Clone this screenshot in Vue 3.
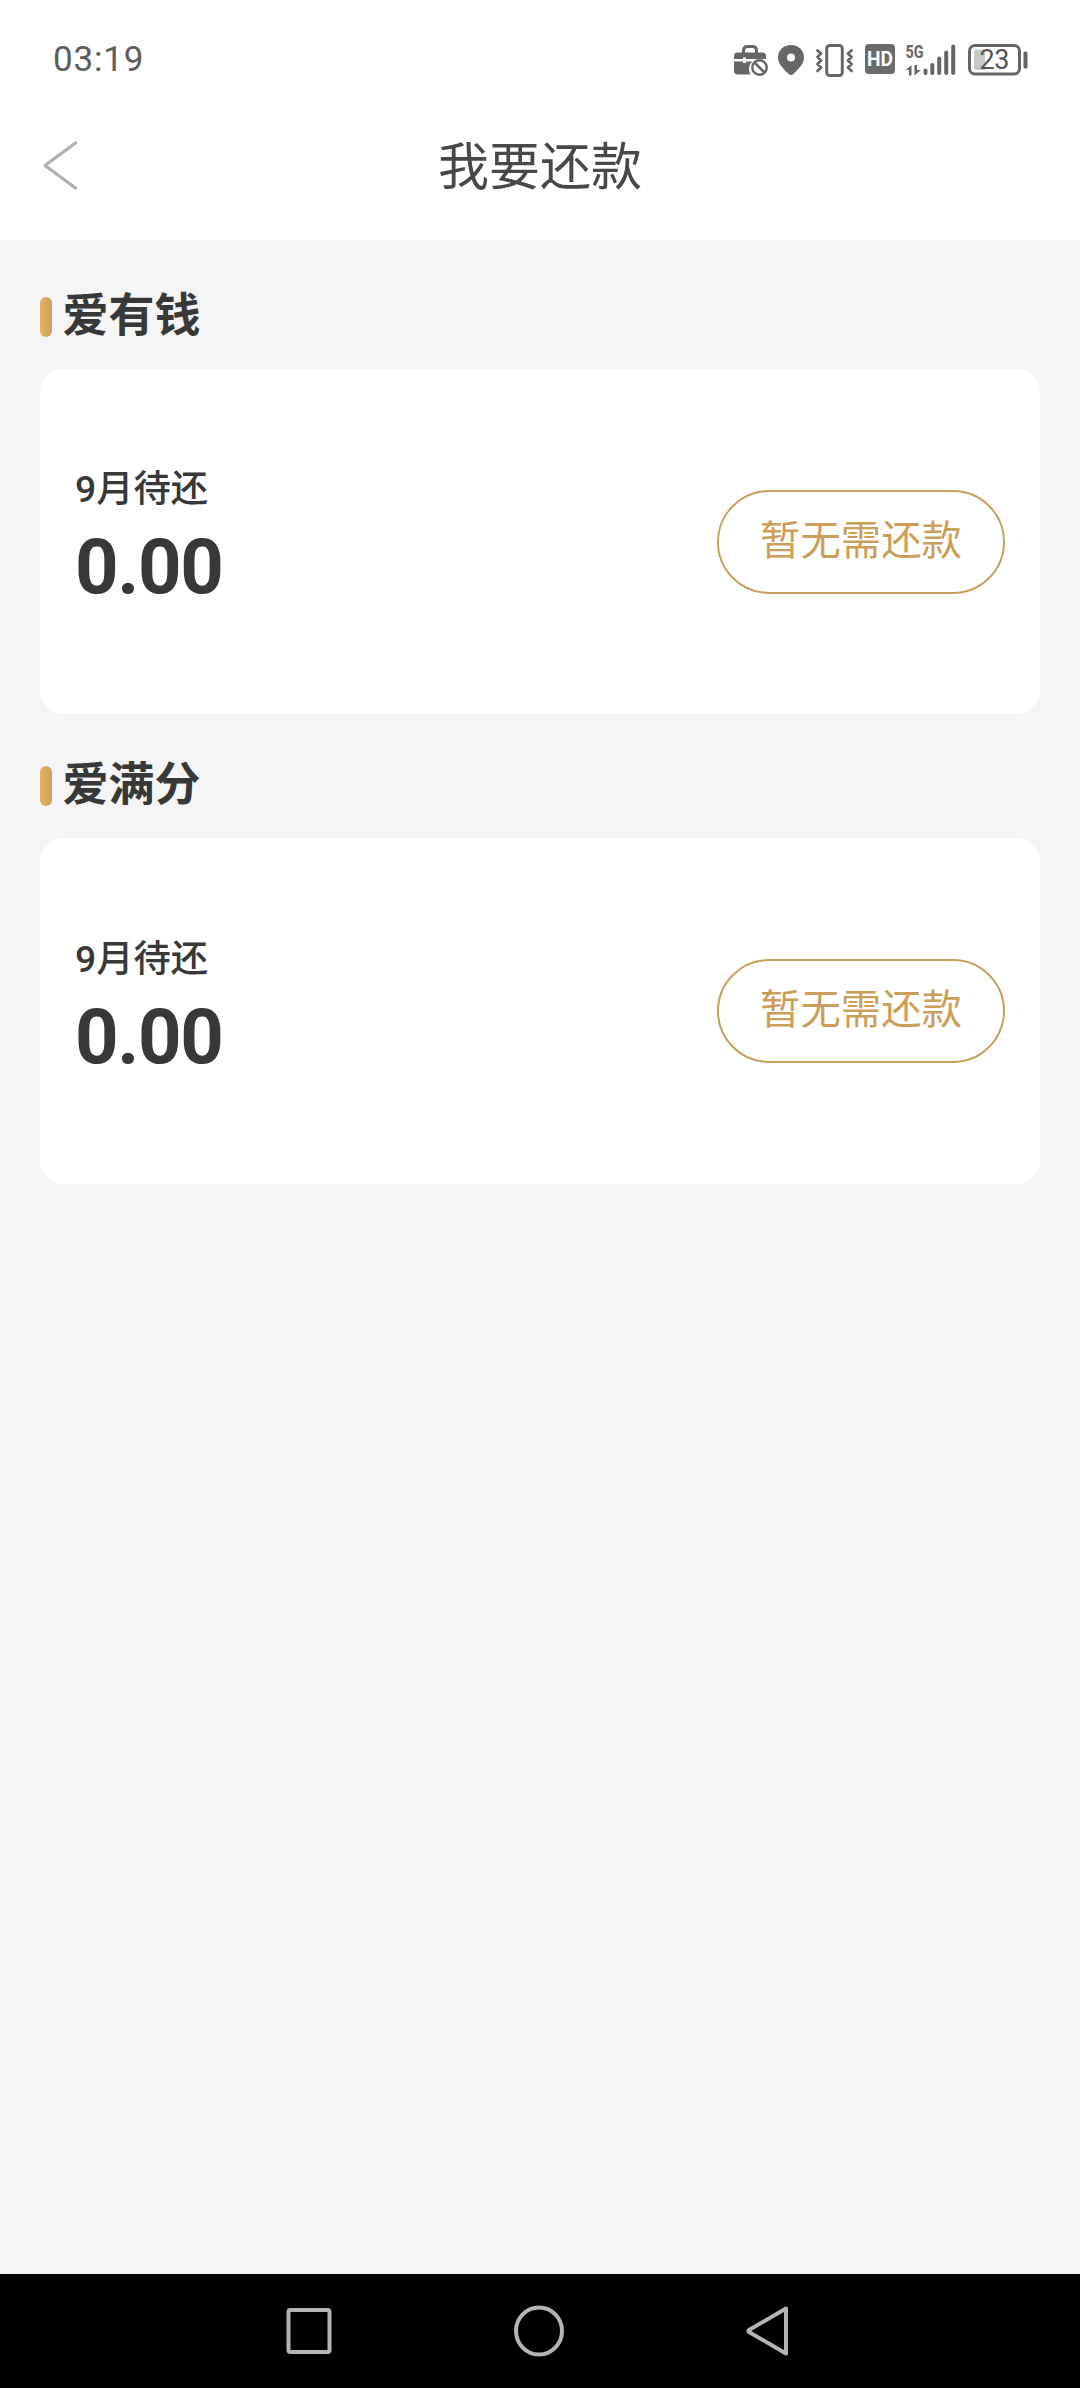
<script setup>
const accounts = [
  { name: '爱有钱', label: '9月待还', amount: '0.00', action: '暂无需还款' },
  { name: '爱满分', label: '9月待还', amount: '0.00', action: '暂无需还款' },
]
</script>

<template>
  <div class="screen">
    <header class="top">
      <div class="status">
        <span class="time">03:19</span>
        <div class="icons">
          <svg class="bag" width="35" height="34" viewBox="0 0 35 34">
            <path d="M9.500 10V6.500Q9.500 2.500 13.500 2.500H18.500Q22.500 2.500 22.500 6.500V10" fill="none" stroke="#666" stroke-width="3" />
            <path d="M0 15V12Q0 8.500 3.500 8.500H28.500Q32 8.500 32 12V15H12V13.500H9V15Z" fill="#666" />
            <path d="M0 17.500H9V19H12V17.500H18.500Q15 20.500 15 25Q15 28 16.500 30.500H4Q0 30.500 0 26.500Z" fill="#666" />
            <circle cx="25.500" cy="23.500" r="7.200" fill="none" stroke="#666" stroke-width="2.500" />
            <path d="M20.500 18.500L30.500 28.500" stroke="#666" stroke-width="2.500" />
          </svg>
          <svg class="pin" width="26" height="34" viewBox="0 0 26 34">
            <path fill-rule="evenodd" d="M13 0C5.500 0 0 5.300 0 12.500C0 19 6 24.500 11 29.200Q13 31 15 29.200C20 24.500 26 19 26 12.500C26 5.300 20.500 0 13 0ZM13 8.500A4 4 0 1 1 13 16.500A4 4 0 1 1 13 8.500Z" fill="#666" />
          </svg>
          <svg class="vibrate" width="37" height="34" viewBox="0 0 37 34">
            <rect x="10.700" y="1.500" width="15.600" height="30" rx="3" fill="none" stroke="#666" stroke-width="3" />
            <path d="M1.500 6.500L5 9.500L1.500 13L5 16.500L1.500 20L5 23.500L1.500 27M35.500 6.500L32 9.500L35.500 13L32 16.500L35.500 20L32 23.500L35.500 27" fill="none" stroke="#666" stroke-width="2.800" stroke-linejoin="round" stroke-linecap="round" />
          </svg>
          <svg class="hd" width="30" height="34" viewBox="0 0 30 34">
            <rect width="30" height="30" rx="4" fill="#6b6b6b" />
            <text x="15" y="22.300" text-anchor="middle" textLength="26" lengthAdjust="spacingAndGlyphs" font-size="21" font-weight="700" fill="#fff">HD</text>
          </svg>
          <svg class="signal" width="50" height="34" viewBox="0 0 50 34">
            <text x="-0.500" y="13.500" textLength="18" lengthAdjust="spacingAndGlyphs" font-size="18.500" font-weight="700" fill="#666">5G</text>
            <path d="M0 26L5.500 21V31.500H3V26ZM8.500 21H11V26H15L8.500 31.500Z" fill="#666" />
            <path d="M19.500 26.500V29M26.300 21V29M33.200 14.500V29M40.200 8.500V29M47.200 2.500V29" stroke="#666" stroke-width="4" stroke-linecap="round" />
          </svg>
          <svg class="battery" width="60" height="34" viewBox="0 0 60 34">
            <rect x="1.500" y="1.500" width="50" height="28.500" rx="5.500" fill="none" stroke="#666" stroke-width="3" />
            <path d="M17 5.500H9Q6 5.500 6 8.500V23Q6 26 9 26H17Z" fill="#c8c8c8" />
            <text x="26.500" y="25" text-anchor="middle" textLength="30" font-size="27" fill="#555">23</text>
            <rect x="55.500" y="7.500" width="4" height="17" rx="1.500" fill="#666" />
          </svg>
        </div>
      </div>
      <nav class="bar">
        <svg class="back" width="36" height="50" viewBox="0 0 36 50">
          <path d="M33.500 2L3 24.500L33.500 47" fill="none" stroke="#b0b0b0" stroke-width="3.200" stroke-linecap="round" stroke-linejoin="round" />
        </svg>
        <h1>我要还款</h1>
      </nav>
    </header>

    <main>
      <section v-for="item in accounts" :key="item.name">
        <h2><i class="mark"></i><span>{{ item.name }}</span></h2>
        <div class="card">
          <div class="due">
            <div class="label">{{ item.label }}</div>
            <div class="amount">{{ item.amount }}</div>
          </div>
          <button type="button"><span>{{ item.action }}</span></button>
        </div>
      </section>
    </main>

    <footer>
      <svg width="46" height="50" viewBox="0 0 46 50"><rect x="2.500" y="4" width="41" height="42" rx="2" /></svg>
      <svg width="50" height="52" viewBox="0 0 50 52"><ellipse cx="25" cy="26" rx="23" ry="23.500" /></svg>
      <svg width="44" height="52" viewBox="0 0 44 52"><path d="M40 3.500V48.500L3 27Q2 26 3 25Z" stroke-linejoin="round" /></svg>
    </footer>
  </div>
</template>

<style>
body {
  margin: 0;
}
</style>

<style scoped>
.screen {
  width: 1080px;
  height: 2388px;
  display: flex;
  flex-direction: column;
  background: #f5f5f5;
  color: #383838;
  font-family: Roboto, "Noto Sans CJK SC", sans-serif;
  overflow: hidden;
}
.top {
  height: 240px;
  background: #fff;
}
.status {
  height: 92px;
  padding: 0 52px 0 53px;
  box-sizing: border-box;
  display: flex;
  justify-content: space-between;
  align-items: flex-start;
}
.time {
  margin-top: 39px;
  font-size: 35px;
  line-height: 41px;
  letter-spacing: 0.8px;
  color: #5c5c5c;
}
.icons {
  margin-top: 44px;
  display: flex;
}
.icons svg {
  display: block;
  overflow: visible;
}
.pin {
  margin: 1px 12px 0 9px;
}
.hd {
  margin-left: 12px;
}
.signal {
  margin-left: 11px;
}
.battery {
  margin-left: 12px;
}
.bar {
  height: 148px;
  padding: 0 42px;
  box-sizing: border-box;
  display: grid;
  grid-template-columns: 36px 1fr 36px;
  align-items: start;
}
.back {
  margin-top: 49px;
}
h1 {
  margin: 39px 0 0;
  font-size: 51px;
  line-height: 74px;
  font-weight: 400;
  text-align: center;
  color: #484848;
}
main {
  flex: 1;
  padding: 0 40px;
}
section {
  height: 469px;
  padding-top: 43px;
  box-sizing: border-box;
}
h2 {
  height: 86px;
  margin: 0;
  display: flex;
  align-items: flex-start;
  font-size: 46px;
  line-height: 65px;
  font-weight: 700;
}
.mark {
  width: 12px;
  height: 40px;
  margin: 14px 10.500px 0 0;
  border-radius: 6px;
  background: linear-gradient(90deg, #e1b266, #cfa05b);
}
.card {
  height: 345px;
  padding: 0 35px;
  box-sizing: border-box;
  display: flex;
  justify-content: space-between;
  align-items: center;
  background: #fff;
  border-radius: 24px;
}
section:last-child .card {
  height: 346px;
}
.due {
  padding-bottom: 9px;
}
.label {
  font-size: 37.300px;
  line-height: 54px;
  font-weight: 500;
}
.amount {
  margin-top: 6px;
  font-size: 76px;
  line-height: 90px;
  font-weight: 700;
  letter-spacing: -1.300px;
}
button {
  width: 288px;
  height: 104px;
  padding: 0 0 8px;
  border: 2px solid #c6a05c;
  border-radius: 52px;
  background: #fff;
  color: #cb9f5a;
  font: 400 40.400px/58px "Noto Sans CJK SC", sans-serif;
}
footer {
  height: 114px;
  padding: 0 290px 0 286px;
  box-sizing: border-box;
  display: flex;
  justify-content: space-between;
  align-items: center;
  background: #000;
}
footer svg {
  fill: none;
  stroke: #b4b4b4;
  stroke-width: 4px;
}
</style>
